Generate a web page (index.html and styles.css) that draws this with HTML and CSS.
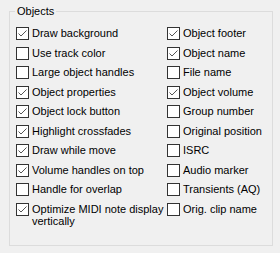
FILE: index.html
```html
<!DOCTYPE html>
<html>

<head>
    <title>Objects</title>
    <link rel="stylesheet" href="styles.css">
</head>

<body>
    <fieldset class="group">
        <legend>Objects</legend>
        <div class="columns">
            <div class="col">
                <label class="opt"><span class="box on"></span><span>Draw background</span></label>
                <label class="opt"><span class="box"></span><span>Use track color</span></label>
                <label class="opt"><span class="box"></span><span>Large object handles</span></label>
                <label class="opt"><span class="box on"></span><span>Object properties</span></label>
                <label class="opt"><span class="box on"></span><span>Object lock button</span></label>
                <label class="opt"><span class="box on"></span><span>Highlight crossfades</span></label>
                <label class="opt"><span class="box on"></span><span>Draw while move</span></label>
                <label class="opt"><span class="box on"></span><span>Volume handles on top</span></label>
                <label class="opt"><span class="box"></span><span>Handle for overlap</span></label>
                <label class="opt"><span class="box on"></span><span>Optimize MIDI note display vertically</span></label>
            </div>
            <div class="col">
                <label class="opt"><span class="box on"></span><span>Object footer</span></label>
                <label class="opt"><span class="box on"></span><span>Object name</span></label>
                <label class="opt"><span class="box"></span><span>File name</span></label>
                <label class="opt"><span class="box on"></span><span>Object volume</span></label>
                <label class="opt"><span class="box"></span><span>Group number</span></label>
                <label class="opt"><span class="box"></span><span>Original position</span></label>
                <label class="opt"><span class="box"></span><span>ISRC</span></label>
                <label class="opt"><span class="box"></span><span>Audio marker</span></label>
                <label class="opt"><span class="box"></span><span>Transients (AQ)</span></label>
                <label class="opt"><span class="box"></span><span>Orig. clip name</span></label>
            </div>
        </div>
    </fieldset>
</body>

</html>
```

FILE: styles.css
```css
body {
    margin: 0;
    background: #f0f0f0;
    font-family: 'Liberation Sans', Arial, sans-serif;
    font-size: 11px;
    color: #000;
}

.group {
    box-sizing: border-box;
    width: 264px;
    height: 241px;
    margin: 5px 0 0 9px;
    padding: 0;
    border: 1px solid #dcdcdc;
}

.group legend {
    margin-left: 5px;
    padding: 0 2px;
    line-height: 13px;
}

.columns {
    display: grid;
    grid-template-columns: 151px 1fr;
    padding: 9px 0 0 6px;
}

.opt {
    display: flex;
    align-items: flex-start;
    gap: 3px;
    min-height: 19.5px;
    line-height: 12px;
}

.box {
    flex: none;
    box-sizing: border-box;
    width: 13px;
    height: 13px;
    border: 1px solid #333;
    background: #fff;
}

.box.on {
    background: #fff url("data:image/svg+xml,%3Csvg xmlns='http://www.w3.org/2000/svg' width='11' height='11'%3E%3Cpolyline points='1.5,5.5 4,8 9.5,2.5' fill='none' stroke='%23555' stroke-width='1'/%3E%3C/svg%3E") no-repeat center;
}
```
